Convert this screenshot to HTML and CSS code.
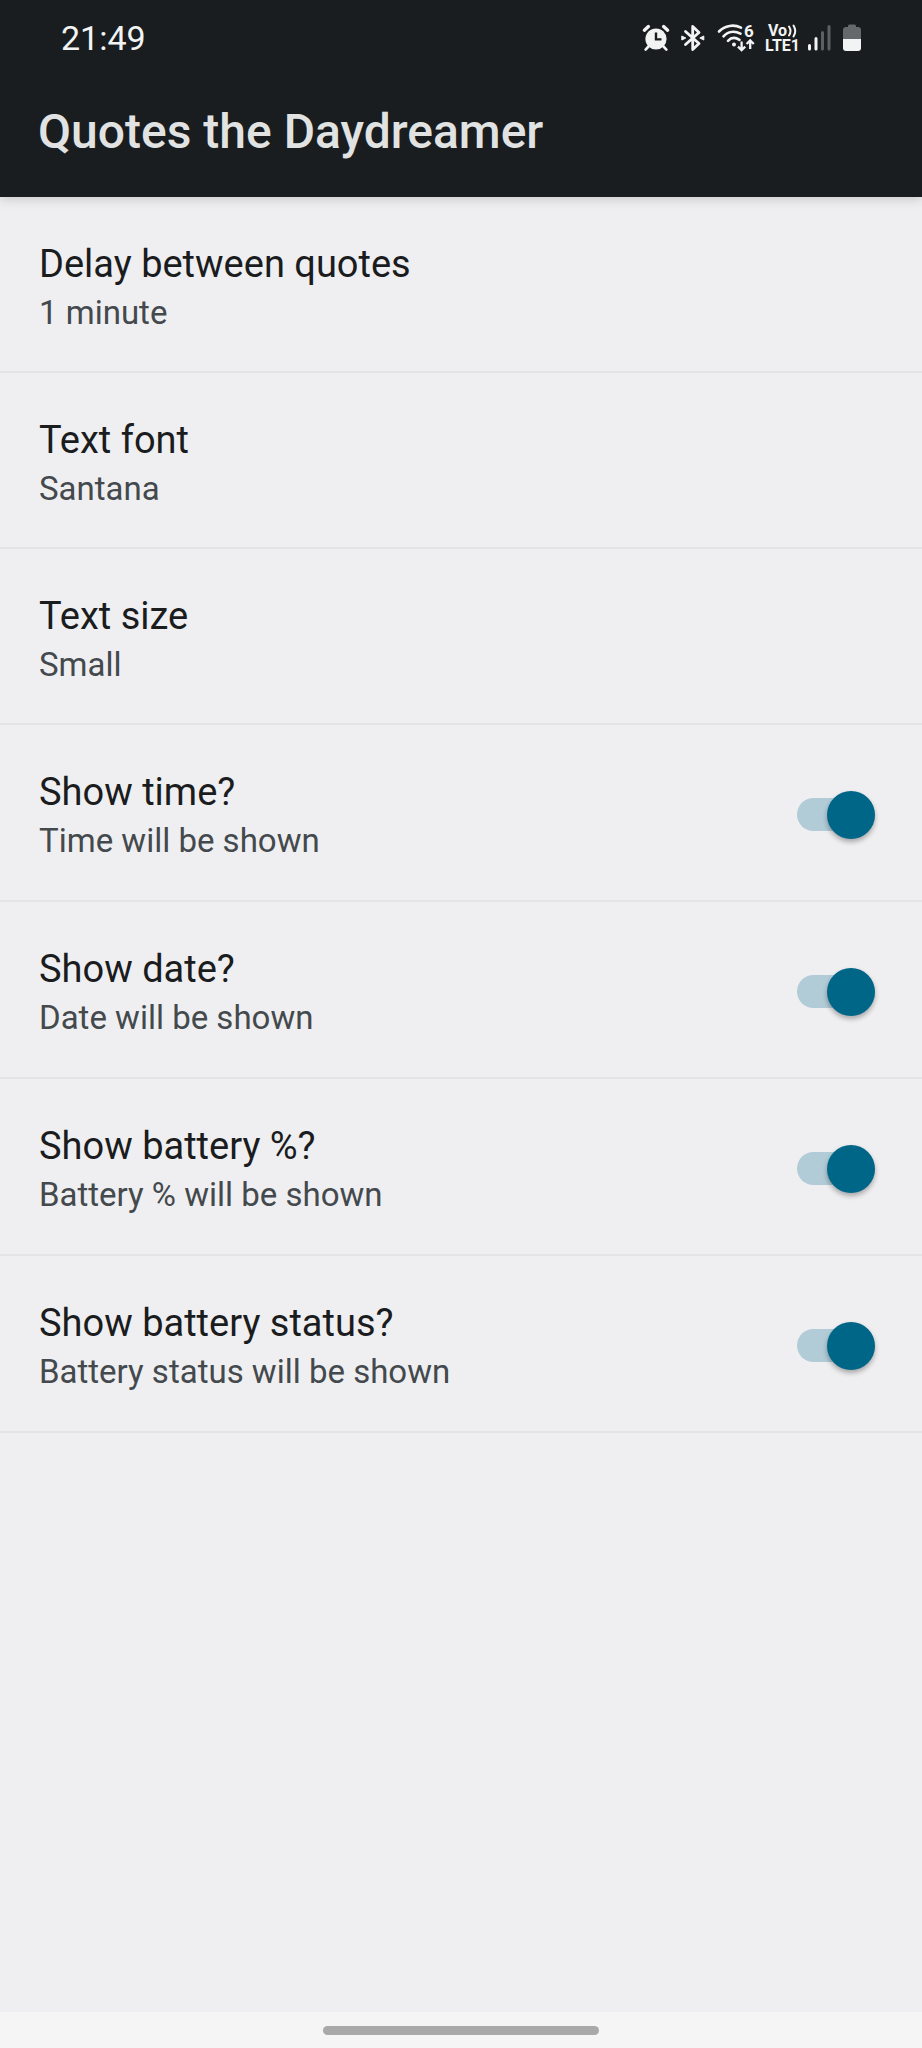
FILE: index.html
```html
<!DOCTYPE html>
<html lang="en">
<head>
<meta charset="utf-8">
<meta name="viewport" content="width=device-width">
<title>Quotes the Daydreamer</title>
<link rel="stylesheet" href="styles.css">
</head>
<body>
<div class="screen">
  <header class="header">
    <div class="status">
      <time class="clock">21:49</time>
      <div class="status-icons">
        <svg width="28" height="36" viewBox="0 -4 28 36" aria-label="Alarm">
          <circle cx="14" cy="15" r="10.6" fill="#f2f4f4"/>
          <path d="M2.4 6.2 L6.4 2.6 M21.600 2.600 L25.600 6.200" fill="none" stroke="#f2f4f4" stroke-width="3.4" stroke-linecap="round"/>
          <path d="M6.500 22.500 L3.600 25.600 M21.500 22.500 L24.400 25.600" fill="none" stroke="#f2f4f4" stroke-width="2.6" stroke-linecap="round"/>
          <path d="M14 8.500 V15.400 H19.500" fill="none" stroke="#1a1d1f" stroke-width="2.4"/>
        </svg>
        <svg width="28" height="36" viewBox="-2 -4 28 36" aria-label="Bluetooth">
          <path d="M4.500 7.500 L18 19.500 L11.700 25.500 V2.500 L18 8.500 L4.500 20.500" fill="none" stroke="#f2f4f4" stroke-width="2.8" stroke-linejoin="round" stroke-linecap="round"/>
          <path d="M.8 12 L4.800 14 L.8 16 Z M22.800 12 L18.800 14 L22.800 16 Z" fill="#f2f4f4" stroke="#f2f4f4" stroke-linejoin="round"/>
        </svg>
        <svg width="38" height="36" viewBox="0 -4 38 36" aria-label="Wi-Fi 6">
          <path d="M3 7.500 C9 1.200 18 .2 25 3.600 M7.500 12.300 C12 7.400 18.500 6.600 24.500 9.600 M12 16.800 C15 13.600 19.500 13.300 23.500 15.800" fill="none" stroke="#f2f4f4" stroke-width="2.6" stroke-linecap="round"/>
          <circle cx="18" cy="20.600" r="2" fill="#f2f4f4"/>
          <path d="M25.600 17.500 V26 M22 22.600 L25.600 26.200 L29.200 22.600 M34.200 25 V16.800 M30.600 20 L34.200 16.400 L37.800 20" fill="none" stroke="#f2f4f4" stroke-width="2.3"/>
          <text x="28" y="13" class="wifi-gen">6</text>
        </svg>
        <svg width="36" height="36" viewBox="0 -4 36 36" aria-label="VoLTE 1">
          <text x="5" y="12" class="net">Vo</text>
          <path d="M26 2.500 Q29 7 26 11.500 M30.500 1.500 Q34 7 30.500 12.500" fill="none" stroke="#f2f4f4" stroke-width="2" stroke-linecap="round"/>
          <text x="2" y="27" class="net">LTE1</text>
        </svg>
        <svg width="26" height="36" viewBox="0 -4 26 36" aria-label="Signal">
          <path d="M1.500 21.500 V25 M8 14.500 V25" stroke="#f2f4f4" stroke-width="3" stroke-linecap="round"/>
          <path d="M14.500 8.500 V25 M21 2.500 V25" stroke="#5d6062" stroke-width="3" stroke-linecap="round"/>
        </svg>
        <svg width="18" height="36" viewBox="0 -4 18 36" aria-label="Battery">
          <path d="M5 3 V2 Q5 .5 6.500 .5 H11.500 Q13 .5 13 2 V3 H15 Q18 3 18 6 V15 H0 V6 Q0 3 3 3 Z" fill="#66696b"/>
          <path d="M0 15 H18 V24 Q18 27 15 27 H3 Q0 27 0 24 Z" fill="#f2f4f4"/>
        </svg>
      </div>
    </div>
    <h1 class="title">Quotes the Daydreamer</h1>
  </header>
  <main class="list">
    <button class="row" type="button"><span class="name">Delay between quotes</span><span class="value">1 minute</span></button>
    <button class="row" type="button"><span class="name">Text font</span><span class="value">Santana</span></button>
    <button class="row" type="button"><span class="name">Text size</span><span class="value">Small</span></button>
    <label class="row row-switch"><span class="label"><span class="name">Show time?</span><span class="value">Time will be shown</span></span><input class="switch" type="checkbox" role="switch" checked></label>
    <label class="row row-switch"><span class="label"><span class="name">Show date?</span><span class="value">Date will be shown</span></span><input class="switch" type="checkbox" role="switch" checked></label>
    <label class="row row-switch"><span class="label"><span class="name">Show battery %?</span><span class="value">Battery % will be shown</span></span><input class="switch" type="checkbox" role="switch" checked></label>
    <label class="row row-switch"><span class="label"><span class="name">Show battery status?</span><span class="value">Battery status will be shown</span></span><input class="switch" type="checkbox" role="switch" checked></label>
  </main>
  <div class="navbar"><div class="handle"></div></div>
</div>
</body>
</html>
```
FILE: styles.css
```css
* { box-sizing: border-box; }
body {
  margin: 0;
  background: #efeff1;
  font-family: Roboto, "Liberation Sans", sans-serif;
}
.screen {
  display: flex;
  flex-direction: column;
  min-height: 100vh;
}
.header {
  background: #1a1d1f;
  color: #e1e3e3;
  box-shadow: 0 3px 10px rgba(0, 0, 0, 0.15);
}
.status {
  display: flex;
  align-items: center;
  justify-content: space-between;
  height: 76px;
  padding: 0 61px;
}
.clock {
  font-size: 34px;
  line-height: 40px;
  color: #f2f4f4;
}
.status-icons {
  display: flex;
  align-items: center;
  gap: 9px;
}
.status-icons svg { overflow: visible; }
.wifi-gen { font-size: 17px; font-weight: 700; fill: #f2f4f4; }
.net { font-size: 16px; font-weight: 700; fill: #f2f4f4; }
.title {
  margin: 0;
  padding: 28px 38px 37px;
  font-size: 48px;
  line-height: 56px;
  font-weight: 500;
}
.list { flex: 1; }
.row {
  display: block;
  width: 100%;
  padding: 43px 39px 38px;
  border: 0;
  border-bottom: 2px solid #e4e4e6;
  background: none;
  font-family: inherit;
  text-align: left;
}
.row-switch {
  display: flex;
  align-items: center;
  justify-content: space-between;
  padding: 43px 47px 39px 39px;
}
.name, .value { display: block; }
.name {
  font-size: 38px;
  line-height: 48px;
  color: #1a1c1e;
}
.value {
  margin-top: 5px;
  font-size: 33px;
  line-height: 40px;
  color: #44494d;
}
.switch {
  appearance: none;
  position: relative;
  display: flex;
  align-items: center;
  width: 78px;
  height: 48px;
  margin: 0;
}
.switch::before {
  content: "";
  flex: 1;
  height: 33px;
  border-radius: 17px;
  background: #b1cbd7;
}
.switch::after {
  content: "";
  position: absolute;
  top: 0;
  left: 0;
  width: 48px;
  height: 48px;
  border-radius: 50%;
  background: #006688;
  box-shadow: 0 3px 5px rgba(0, 0, 0, 0.3);
}
.switch:checked::after {
  left: auto;
  right: 0;
}
.navbar {
  display: flex;
  justify-content: center;
  align-items: center;
  height: 36px;
  background: #f5f5f5;
}
.handle {
  width: 30%;
  height: 9px;
  border-radius: 5px;
  background: #a9a9a9;
}
```
